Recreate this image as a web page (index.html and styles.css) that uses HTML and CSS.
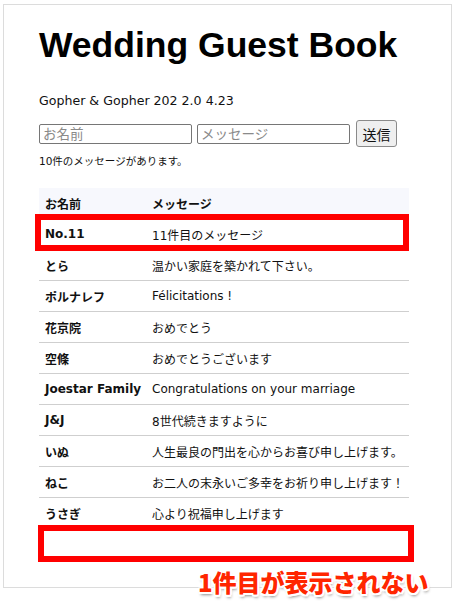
FILE: index.html
```html
<!DOCTYPE html>
<html lang="ja">
<head>
<meta charset="utf-8">
<title>Wedding Guest Book</title>
<link rel="stylesheet" href="styles.css">
</head>
<body>
<div class="frame">
  <h1 class="title">Wedding Guest Book</h1>
  <p class="date">Gopher &amp; Gopher 202 2.0 4.23</p>
  <form class="entry">
    <input class="field" type="text" placeholder="お名前">
    <input class="field" type="text" placeholder="メッセージ">
    <button class="send" type="button">送信</button>
  </form>
  <p class="count">10件のメッセージがあります。</p>
  <table class="book">
    <thead>
      <tr><th class="c-name">お名前</th><th class="c-msg">メッセージ</th></tr>
    </thead>
    <tbody>
      <tr><td class="name">No.11</td><td>11件目のメッセージ</td></tr>
      <tr><td class="name">とら</td><td>温かい家庭を築かれて下さい。</td></tr>
      <tr><td class="name">ポルナレフ</td><td>Félicitations !</td></tr>
      <tr><td class="name">花京院</td><td>おめでとう</td></tr>
      <tr><td class="name">空條</td><td>おめでとうございます</td></tr>
      <tr><td class="name">Joestar Family</td><td>Congratulations on your marriage</td></tr>
      <tr><td class="name">J&amp;J</td><td>8世代続きますように</td></tr>
      <tr><td class="name">いぬ</td><td>人生最良の門出を心からお喜び申し上げます。</td></tr>
      <tr><td class="name">ねこ</td><td>お二人の末永いご多幸をお祈り申し上げます！</td></tr>
      <tr><td class="name">うさぎ</td><td>心より祝福申し上げます</td></tr>
    </tbody>
  </table>
  <div class="mark mark-top"></div>
  <div class="mark mark-bottom"></div>
  <div class="note">1件目が表示されない</div>
</div>
</body>
</html>
```

FILE: styles.css
```css
html, body {
  margin: 0;
  padding: 0;
  background: #ffffff;
}

body {
  min-height: 603px;
  font-family: "DejaVu Sans", "Noto Sans CJK JP", sans-serif;
  color: #111111;
}

.frame {
  position: relative;
  box-sizing: border-box;
  width: 449px;
  height: 584px;
  margin: 4px 0 15px 3px;
  padding: 20px 42px 0 35px;
  border: 1px solid #dcdcdc;
}

.title {
  margin: 0;
  font-family: "Liberation Sans", "Noto Sans CJK JP", sans-serif;
  font-size: 35.5px;
  line-height: 40px;
  font-weight: 700;
  color: #000000;
}

.date {
  margin: 28px 0 0;
  font-size: 12.6px;
  line-height: 16px;
}

.entry {
  display: flex;
  align-items: center;
  margin-top: 11px;
  height: 27px;
}

.field {
  box-sizing: border-box;
  width: 153px;
  height: 20px;
  margin: 0 5px 0 0;
  padding: 0 3px;
  border: 1px solid #767676;
  border-radius: 2px;
  font-family: "DejaVu Sans", "Noto Sans CJK JP", sans-serif;
  font-size: 13.5px;
  color: #111;
  background: #fff;
}

.field + .field {
  margin-right: 6px;
}

.field::placeholder {
  color: #8a8a8a;
}

.send {
  box-sizing: border-box;
  width: 41px;
  height: 27px;
  margin: 0;
  padding: 0;
  border: 1px solid #8a8a8a;
  border-radius: 3px;
  background: #efefef;
  font-family: "Noto Sans CJK JP", sans-serif;
  font-size: 14px;
  color: #111;
}

.count {
  margin: 7px 0 0;
  font-size: 10.5px;
  line-height: 14px;
}

.book {
  margin-top: 20px;
  width: 370px;
  table-layout: fixed;
  border-collapse: collapse;
  font-size: 12px;
}

.book th,
.book td {
  height: 30px;
  padding: 0 6px;
  text-align: left;
  vertical-align: middle;
  white-space: nowrap;
  border-bottom: 1px solid #cfcfcf;
}

.book thead th {
  background: #f7f8fd;
  font-weight: 700;
  border-bottom-color: #f7f8fd;
}

.c-name {
  width: 95px;
}

.book .name {
  font-weight: 700;
}

.mark {
  position: absolute;
  box-sizing: border-box;
  height: 37px;
  border: 6px solid #ff0000;
}

.mark-top {
  left: 31px;
  top: 209px;
  width: 374px;
}

.mark-bottom {
  left: 34px;
  top: 520px;
  width: 376px;
}

.note {
  position: absolute;
  z-index: 2;
  left: 194px;
  top: 564px;
  font-family: "Noto Sans CJK JP", sans-serif;
  font-size: 24px;
  line-height: 25px;
  font-weight: 900;
  color: #ff2600;
  white-space: nowrap;
  text-shadow:
    2px 0 0 #fff, -2px 0 0 #fff, 0 2px 0 #fff, 0 -2px 0 #fff,
    1.5px 1.5px 0 #fff, -1.5px 1.5px 0 #fff, 1.5px -1.5px 0 #fff, -1.5px -1.5px 0 #fff,
    1px 3px 3px rgba(0, 0, 0, 0.45);
}
```
